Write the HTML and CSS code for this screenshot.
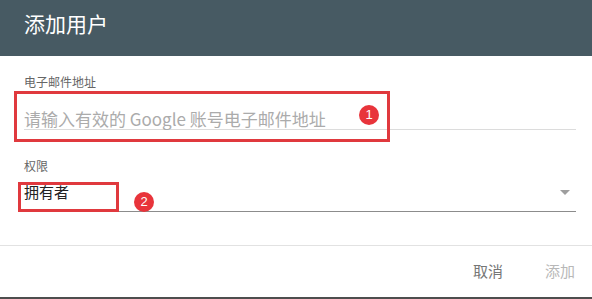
FILE: index.html
```html
<!DOCTYPE html>
<html lang="zh-CN">
<head>
<meta charset="utf-8">
<title>添加用户</title>
<link rel="stylesheet" href="styles.css">
</head>
<body>
<div class="dialog">
  <header class="dialog-header">
    <h1 class="dialog-title">添加用户</h1>
  </header>
  <div class="dialog-body">
    <div class="field">
      <label class="field-label">电子邮件地址</label>
      <div class="text-input">
        <span class="placeholder">请输入有效的 Google 账号电子邮件地址</span>
      </div>
    </div>
    <div class="field field-second">
      <label class="field-label">权限</label>
      <div class="select">
        <span class="select-value">拥有者</span>
        <span class="select-arrow"></span>
      </div>
    </div>
  </div>
  <footer class="dialog-footer">
    <span class="btn btn-cancel">取消</span>
    <span class="btn btn-add">添加</span>
  </footer>

  <div class="mark mark-one"></div>
  <div class="badge badge-one">1</div>
  <div class="mark mark-two"></div>
  <div class="badge badge-two">2</div>
</div>
</body>
</html>
```

FILE: styles.css
```css
* { box-sizing: border-box; }

html, body {
  margin: 0;
  padding: 0;
  background: #ffffff;
}

body {
  font-family: "Noto Sans CJK SC", "Noto Sans", "Liberation Sans", sans-serif;
}

.dialog {
  position: relative;
  width: 592px;
  height: 299px;
  background: #ffffff;
  border-bottom: 2px solid #4e4e4e;
  display: flex;
  flex-direction: column;
}

.dialog-header {
  height: 56px;
  background: #475a63;
  padding: 9px 24px 0;
}

.dialog-title {
  margin: 0;
  font-size: 21px;
  line-height: 28px;
  font-weight: 400;
  color: #ffffff;
}

.dialog-body {
  padding: 18px 16px 33px 24px;
  border-bottom: 1px solid #e2e2e2;
}

.field-label {
  display: block;
  font-size: 12px;
  line-height: 16px;
  color: #666666;
}

.text-input {
  padding-top: 19px;
  border-bottom: 1px solid #dcdcdc;
}

.placeholder {
  display: block;
  font-size: 17px;
  line-height: 20px;
  color: #ababab;
}

.field-second {
  margin-top: 28px;
}

.select {
  display: flex;
  align-items: center;
  justify-content: space-between;
  padding: 8px 0 9px;
  border-bottom: 1px solid #8c8c8c;
}

.select-value {
  font-size: 15px;
  line-height: 20px;
  color: #222222;
}

.select-arrow {
  width: 0;
  height: 0;
  margin-right: 6px;
  border-left: 5px solid transparent;
  border-right: 5px solid transparent;
  border-top: 5px solid #9e9e9e;
}

.dialog-footer {
  flex: 1;
  display: flex;
  justify-content: flex-end;
  align-items: flex-start;
  gap: 42px;
  padding: 15px 17px 0 0;
}

.btn {
  font-size: 15px;
  line-height: 20px;
}

.btn-cancel { color: #767676; }
.btn-add { color: #b8b8b8; }

/* annotation overlays */
.mark {
  position: absolute;
  border: 3px solid #e0393e;
}

.mark-one {
  left: 14px;
  top: 91px;
  width: 376px;
  height: 51px;
}

.mark-two {
  left: 18px;
  top: 182px;
  width: 101px;
  height: 30px;
}

.badge {
  position: absolute;
  width: 20px;
  height: 20px;
  border-radius: 50%;
  background: #e8343b;
  color: #ffffff;
  font-family: "Liberation Sans", "Noto Sans", sans-serif;
  font-size: 13px;
  line-height: 20px;
  text-align: center;
}

.badge-one {
  left: 359px;
  top: 105px;
}

.badge-two {
  left: 134px;
  top: 192px;
}
```
